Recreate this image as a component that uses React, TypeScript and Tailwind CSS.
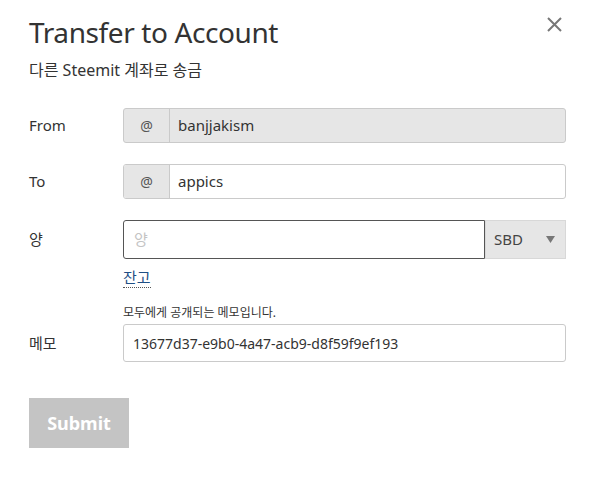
import React from 'react'

const font = { fontFamily: '"Noto Sans", "Noto Sans CJK KR", sans-serif' }

function Row({ label, children }: { label: string; children: React.ReactNode }) {
  return (
    <div className="flex items-center">
      <div className="w-[94px] shrink-0 text-[15px] text-[#333]">{label}</div>
      <div className="flex-1">{children}</div>
    </div>
  )
}

export default function App() {
  return (
    <main className="relative w-[595px] h-[480px] bg-white px-[29px] pt-[12px]" style={font}>
      {/* close */}
      <button className="absolute top-[17px] right-[33px] text-[#777]">
        <svg width="15" height="15" viewBox="0 0 15 15">
          <path d="M1 1 L14 14 M14 1 L1 14" stroke="currentColor" strokeWidth="2" />
        </svg>
      </button>

      <h1 className="text-[28px] leading-[40px] text-[#333] tracking-[-0.4px]">Transfer to Account</h1>
      <p className="mt-[7px] text-[16px] leading-[22px] text-[#333]">다른 Steemit 계좌로 송금</p>

      <div className="mt-[27px] flex flex-col">
        <Row label="From">
          <div className="flex h-[35px] rounded-[3px] border border-[#cacaca] bg-[#e6e6e6] overflow-hidden">
            <span className="w-[46px] flex items-center justify-center border-r border-[#cacaca] text-[14px] text-[#555]">@</span>
            <span className="flex items-center pl-[8px] text-[15px] text-[#333]">banjjakism</span>
          </div>
        </Row>

        <div className="mt-[21px]">
          <Row label="To">
            <div className="flex h-[35px] rounded-[3px] border border-[#cacaca] bg-white overflow-hidden">
              <span className="w-[46px] flex items-center justify-center border-r border-[#cacaca] bg-[#e6e6e6] text-[14px] text-[#555]">@</span>
              <span className="flex items-center pl-[8px] text-[15px] text-[#333]">appics</span>
            </div>
          </Row>
        </div>

        <div className="mt-[21px]">
          <Row label="양">
            <div className="flex h-[39px]">
              <div className="flex-1 flex items-center rounded-l-[3px] border border-[#555] pl-[10px] text-[15px] text-[#c4c4c4]">양</div>
              <div className="w-[81px] flex items-center justify-between bg-[#e6e6e6] border border-[#d8d8d8] pl-[8px] pr-[10px] text-[15px] text-[#444]">
                <span>SBD</span>
                <svg width="9" height="7" viewBox="0 0 9 7">
                  <path d="M0 0 H9 L4.5 7 Z" fill="#777" />
                </svg>
              </div>
            </div>
          </Row>
        </div>

        <div className="pl-[94px] mt-[6px]">
          <span className="text-[15px] text-[#1f4f85] border-b border-dotted border-[#555] leading-[20px]">잔고</span>
        </div>

        <div className="pl-[94px] mt-[16px] text-[12px] text-[#333] leading-[16px]">모두에게 공개되는 메모입니다.</div>

        <div className="mt-[3px]">
          <Row label="메모">
            <div className="flex items-center h-[38px] rounded-[3px] border border-[#cacaca] pl-[9px] text-[14px] text-[#333]">
              13677d37-e9b0-4a47-acb9-d8f59f9ef193
            </div>
          </Row>
        </div>

        <div className="mt-[36px]">
          <button className="w-[100px] h-[50px] bg-[#c4c4c4] text-white text-[18px] font-bold" style={{ fontFamily: '"Noto Sans", sans-serif' }}>
            Submit
          </button>
        </div>
      </div>
    </main>
  )
}
